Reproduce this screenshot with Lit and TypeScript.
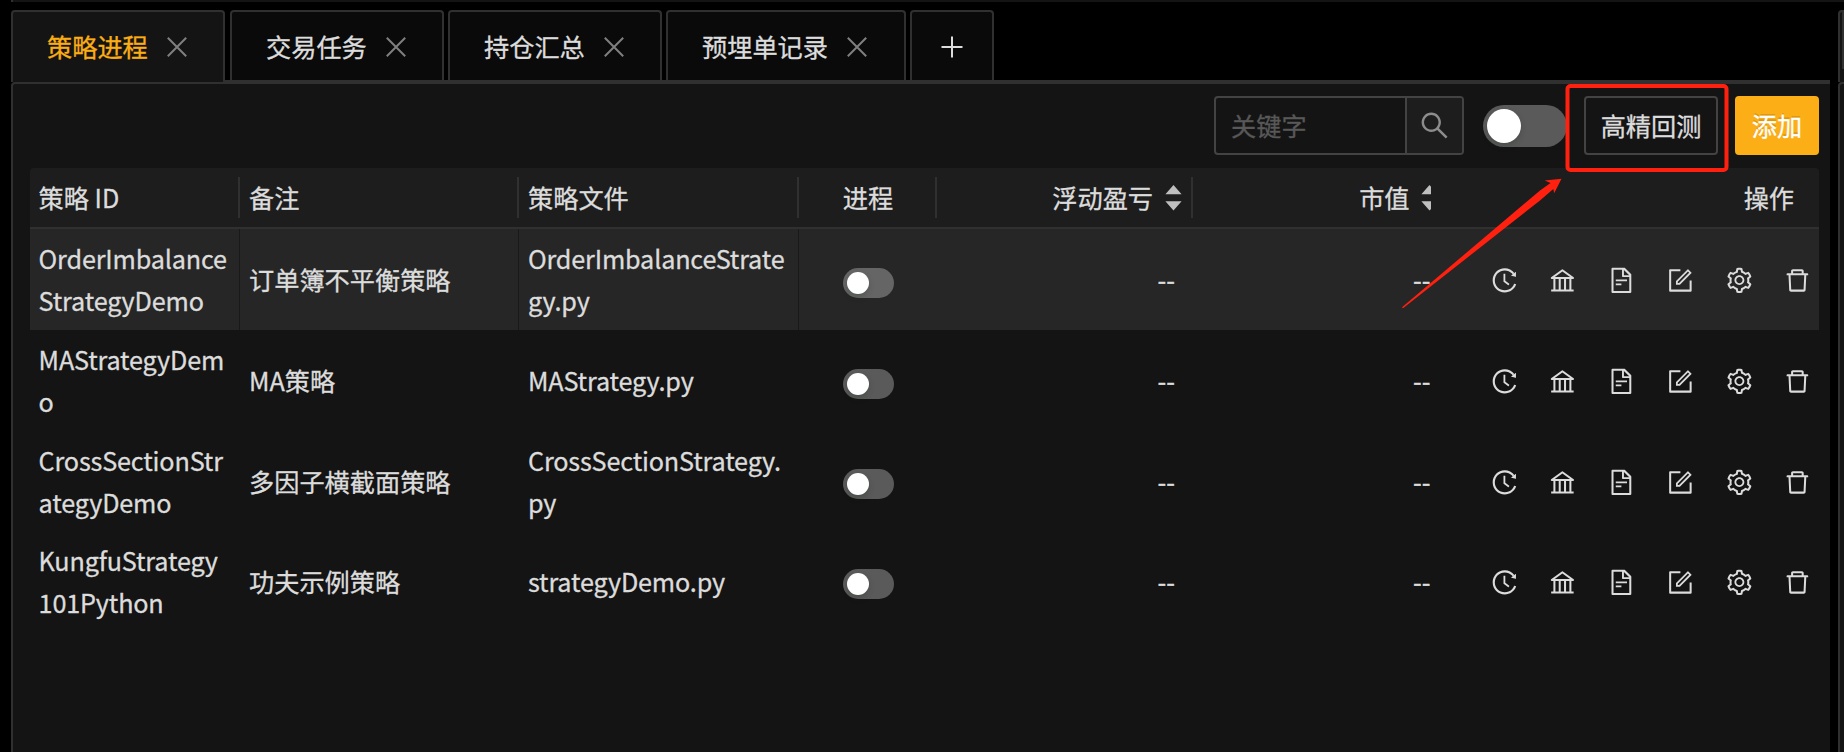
import { LitElement, html, css, svg } from "lit";
import { customElement, state } from "lit/decorators.js";

const ICONS: Record<string, string> = {
  history:
    "M536.1 273H488c-4.4 0-8 3.6-8 8v275.3c0 2.6 1.2 5 3.3 6.5l165.3 120.7c3.6 2.6 8.6 1.9 11.2-1.7l28.6-39c2.7-3.7 1.9-8.7-1.7-11.2L544.1 528.5V281c0-4.4-3.6-8-8-8zm219.8 75.2l156.8 38.3c5 1.2 9.9-2.6 9.9-7.7l.8-161.5c0-6.7-7.7-10.5-12.9-6.3L752.9 334.1a8 8 0 003 14.1zm167.7 301.1l-56.7-19.5a8 8 0 00-10.1 4.8c-1.9 5.1-3.9 10.1-6 15.1-17.8 42.1-43.3 80-75.9 112.5a353 353 0 01-112.5 75.9 352.18 352.18 0 01-137.7 27.8c-47.8 0-94.1-9.3-137.7-27.8a353 353 0 01-112.5-75.9c-32.5-32.5-58-70.4-75.9-112.5A353.44 353.44 0 01171 512c0-47.8 9.3-94.2 27.8-137.8 17.8-42.1 43.3-80 75.9-112.5a353 353 0 01112.5-75.9C430.6 167.3 477 158 524.8 158s94.1 9.3 137.7 27.8A353 353 0 01775 261.7c10.2 10.3 19.8 21 28.6 32.3l59.8-46.8C784.7 146.6 662.2 81.9 524.6 82 285 82.1 92.6 276.7 95 516.4 97.4 751.9 288.9 942 524.8 942c185.5 0 343.5-117.6 403.7-282.3 1.5-4.2-.7-8.9-4.9-10.4z",
  bank:
    "M894 462c30.9 0 43.8-39.7 18.7-58L530.8 126.2a31.81 31.81 0 00-37.6 0L111.3 404c-25.1 18.2-12.2 58 18.8 58H192v374h-72c-4.4 0-8 3.6-8 8v52c0 4.4 3.6 8 8 8h784c4.4 0 8-3.6 8-8v-52c0-4.4-3.6-8-8-8h-72V462h62zM512 196.7l271.1 197.2H240.9L512 196.7zM264 462h117v374H264V462zm189 0h117v374H453V462zm307 374H642V462h118v374z",
  file:
    "M854.6 288.6L639.4 73.4c-6-6-14.1-9.4-22.6-9.4H192c-17.7 0-32 14.3-32 32v832c0 17.7 14.3 32 32 32h640c17.7 0 32-14.3 32-32V311.3c0-8.5-3.4-16.7-9.4-22.7zM790.2 326H602V137.8L790.2 326zm1.8 562H232V136h302v216a42 42 0 0042 42h216v494zM504 618H320c-4.4 0-8 3.6-8 8v48c0 4.4 3.6 8 8 8h184c4.4 0 8-3.6 8-8v-48c0-4.4-3.6-8-8-8zM312 490v48c0 4.4 3.6 8 8 8h384c4.4 0 8-3.6 8-8v-48c0-4.4-3.6-8-8-8H320c-4.4 0-8 3.6-8 8z",
  form:
    "M904 512h-56c-4.4 0-8 3.6-8 8v320H184V184h320c4.4 0 8-3.6 8-8v-56c0-4.4-3.6-8-8-8H144c-17.7 0-32 14.3-32 32v736c0 17.7 14.3 32 32 32h736c17.7 0 32-14.3 32-32V520c0-4.4-3.6-8-8-8z M355.9 534.9L354 653.8c-.1 8.9 7.1 16.2 16 16.2h.4l118-2.9c2-.1 4-.9 5.4-2.3l415.9-415c3.1-3.1 3.1-8.2 0-11.3L785.4 114.3c-1.6-1.6-3.6-2.3-5.7-2.3s-4.1.8-5.7 2.3l-415.8 415a8.3 8.3 0 00-2.3 5.6zm63.5 23.6L779.7 199l45.2 45.1-360.5 359.7-45.7 1.1.7-46.4z",
  setting:
    "M924.8 625.7l-65.5-56c3.1-19 4.7-38.4 4.7-57.8s-1.6-38.8-4.7-57.8l65.5-56a32.03 32.03 0 009.3-35.2l-.9-2.6a443.74 443.74 0 00-79.7-137.9l-1.8-2.1a32.12 32.12 0 00-35.1-9.5l-81.3 28.9c-30-24.6-63.5-44-99.7-57.6l-15.7-85a32.05 32.05 0 00-25.8-25.7l-2.7-.5c-52.1-9.4-106.9-9.4-159 0l-2.7.5a32.05 32.05 0 00-25.8 25.7l-15.8 85.4a351.86 351.86 0 00-99 57.4l-81.9-29.1a32 32 0 00-35.1 9.5l-1.8 2.1a446.02 446.02 0 00-79.7 137.9l-.9 2.6c-4.5 12.5-.8 26.5 9.3 35.2l66.3 56.6c-3.1 18.8-4.6 38-4.6 57.1 0 19.2 1.5 38.4 4.6 57.1L99 625.5a32.03 32.03 0 00-9.3 35.2l.9 2.6c18.1 50.4 44.9 96.9 79.7 137.9l1.8 2.1a32.12 32.12 0 0035.1 9.5l81.9-29.1c29.8 24.5 63.1 43.9 99 57.4l15.8 85.4a32.05 32.05 0 0025.8 25.7l2.7.5a449.4 449.4 0 00159 0l2.7-.5a32.05 32.05 0 0025.8-25.7l15.7-85a350 350 0 0099.7-57.6l81.3 28.9a32 32 0 0035.1-9.5l1.8-2.1c34.8-41.1 61.6-87.5 79.7-137.9l.9-2.6c4.5-12.3.8-26.3-9.3-35zM788.3 465.9c2.5 15.1 3.8 30.6 3.8 46.1s-1.3 31-3.8 46.1l-6.6 40.1 74.7 63.9a370.03 370.03 0 01-42.6 73.6L721 702.8l-31.4 25.8c-23.9 19.6-50.5 35-79.3 45.8l-38.1 14.3-17.9 97a377.5 377.5 0 01-85 0l-17.9-97.2-37.8-14.5c-28.5-10.8-55-26.2-78.7-45.7l-31.4-25.9-93.4 33.2c-17-22.9-31.2-47.6-42.6-73.6l75.5-64.5-6.5-40c-2.4-14.9-3.7-30.3-3.7-45.5 0-15.3 1.2-30.6 3.7-45.5l6.5-40-75.5-64.5c11.3-26.1 25.6-50.7 42.6-73.6l93.4 33.2 31.4-25.9c23.7-19.5 50.2-34.9 78.7-45.7l37.9-14.3 17.9-97.2c28.1-3.2 56.8-3.2 85 0l17.9 97 38.1 14.3c28.7 10.8 55.4 26.2 79.3 45.8l31.4 25.8 92.8-32.9c17 22.9 31.2 47.6 42.6 73.6L781.8 426l6.5 39.9zM512 326c-97.2 0-176 78.8-176 176s78.8 176 176 176 176-78.8 176-176-78.8-176-176-176zm79.2 255.2A111.6 111.6 0 01512 614c-29.9 0-58-11.7-79.2-32.8A111.6 111.6 0 01400 502c0-29.9 11.7-58 32.8-79.2C454 401.6 482.1 390 512 390c29.9 0 58 11.6 79.2 32.8A111.6 111.6 0 01624 502c0 29.9-11.7 58-32.8 79.2z",
  trash:
    "M360 184h-8c4.4 0 8-3.6 8-8v8h304v-8c0 4.4 3.6 8 8 8h-8v72h72v-80c0-35.3-28.7-64-64-64H352c-35.3 0-64 28.7-64 64v80h72v-72zm504 72H160c-17.7 0-32 14.3-32 32v32c0 4.4 3.6 8 8 8h60.4l24.7 523c1.6 34.1 29.8 61 63.9 61h454c34.2 0 62.3-26.8 63.9-61l24.7-523H888c4.4 0 8-3.6 8-8v-32c0-17.7-14.3-32-32-32zM731.3 840H292.7l-24.2-512h487l-24.2 512z",
  search:
    "M909.6 854.5L649.9 594.8C690.2 542.7 712 479 712 412c0-80.2-31.3-155.4-87.9-212.1-56.6-56.7-132-87.9-212.1-87.9s-155.5 31.3-212.1 87.9C143.2 256.5 112 331.8 112 412c0 80.1 31.3 155.5 87.9 212.1C256.5 680.8 331.8 712 412 712c67 0 130.6-21.8 182.7-62l259.7 259.6a8.2 8.2 0 0011.6 0l43.6-43.5a8.2 8.2 0 000-11.6zM570.4 570.4C528 612.7 471.8 636 412 636s-116-23.3-158.4-65.6C211.3 528 188 471.8 188 412s23.3-116.1 65.6-158.4C296 211.3 352.2 188 412 188s116.1 23.2 158.4 65.6S636 352.2 636 412s-23.3 116.1-65.6 158.4z",
};

const icon = (name: string) =>
  html`<svg class="icon" viewBox="0 0 1024 1024">${svg`<path d=${ICONS[name]}></path>`}</svg>`;

const sorter = html`<svg class="sorter" viewBox="0 0 17 26">
  <path d="M8.5 0L16.6 9.3H.4zM8.5 25.6L.4 16.3h16.2z"></path>
</svg>`;

const ACTIONS = ["history", "bank", "file", "form", "setting", "trash"];

interface Strategy {
  id: string;
  note: string;
  file: string;
}

@customElement("app-root")
export class AppRoot extends LitElement {
  @state() private active = 0;
  private tabs = ["策略进程", "交易任务", "持仓汇总", "预埋单记录"];
  private rows: Strategy[] = [
    { id: "OrderImbalanceStrategyDemo", note: "订单簿不平衡策略", file: "OrderImbalanceStrategy.py" },
    { id: "MAStrategyDemo", note: "MA策略", file: "MAStrategy.py" },
    { id: "CrossSectionStrategyDemo", note: "多因子横截面策略", file: "CrossSectionStrategy.py" },
    { id: "KungfuStrategy101Python", note: "功夫示例策略", file: "strategyDemo.py" },
  ];

  static styles = css`
    :host {
      display: block;
      position: relative;
      width: 1844px;
      height: 752px;
      overflow: hidden;
      background: #000;
      color: #dcdcdc;
      font: 25.2px/42px "Noto Sans CJK SC", sans-serif;
      -webkit-text-stroke: 0.3px currentColor;
    }
    * {
      box-sizing: border-box;
    }
    .layout {
      display: flex;
      flex-direction: column;
      height: 100%;
      padding-left: 11px;
    }
    .upper {
      height: 2px;
      flex: none;
      background: #141414;
      border-left: 2px solid #303030;
      margin-bottom: 8px;
    }
    .main {
      flex: 1;
      min-height: 0;
      display: flex;
      gap: 8px;
    }
    .board {
      width: 1819px;
      flex: none;
      display: flex;
      flex-direction: column;
    }
    .tabs {
      display: flex;
      gap: 4px;
      height: 72px;
      flex: none;
      box-shadow: inset 0 -2px #303030;
    }
    .tab {
      height: 70px;
      display: flex;
      align-items: center;
      width: 214px;
      padding: 2px 0 0 34px;
      gap: 19px;
      border: 2px solid #303030;
      border-bottom: 0;
      border-radius: 4px 4px 0 0;
      background: #0a0a0a;
    }
    .tab span {
      padding-bottom: 2px;
    }
    .tab.active {
      height: 72px;
      padding: 2px 0 2px 34px;
      margin-right: 1px;
      background: #141414;
      color: #faad14;
    }
    .tab.wide {
      width: 240px;
      padding-left: 34px;
    }
    .tab.plus {
      width: 84px;
      padding-left: 29px;
    }
    .close {
      width: 20px;
      height: 20px;
      stroke: #7f7f7f;
      stroke-width: 2;
    }
    .add-icon {
      width: 22px;
      height: 22px;
      stroke: #dcdcdc;
      stroke-width: 2;
    }
    .panel {
      flex: 1;
      border: 2px solid #303030;
      border-width: 2px 0 0 2px;
      border-radius: 4px 0 0 0;
      background: #141414;
      padding: 12px 11px 0 17px;
    }
    .toolbar {
      display: flex;
      justify-content: flex-end;
      align-items: center;
      height: 59px;
      margin-bottom: 13px;
    }
    .search {
      display: flex;
      width: 250px;
      height: 59px;
      border: 2px solid #434343;
      border-radius: 4px;
      overflow: hidden;
      margin-right: 19px;
    }
    .placeholder {
      flex: 1;
      padding: 6px 0 0 15px;
      color: #585858;
    }
    .search-button {
      width: 57px;
      border-left: 2px solid #434343;
      background: #1d1d1d;
      display: grid;
      place-items: center;
      fill: #8c8c8c;
    }
    .search-button .icon {
      width: 33px;
      height: 33px;
    }
    .switch {
      display: block;
      width: 51px;
      height: 30px;
      border-radius: 15px;
      background: #5a5a5a;
      padding: 4px;
    }
    .knob {
      display: block;
      width: 22px;
      height: 22px;
      border-radius: 50%;
      background: #fff;
      box-shadow: 0 3px 6px rgba(0, 35, 11, 0.2);
    }
    .switch.large {
      width: 84px;
      height: 42px;
      border-radius: 21px;
      margin-right: 17px;
    }
    .switch.large .knob {
      width: 34px;
      height: 34px;
    }
    .button {
      width: 134px;
      height: 59px;
      border: 2px solid #434343;
      border-radius: 4px;
      padding-top: 6px;
      text-align: center;
      margin-right: 17px;
    }
    .button.primary {
      width: 84px;
      margin: 0;
      border-color: #fcae17;
      background: #fcae17;
      color: #fff;
      text-shadow: 0 -2px 0 rgba(0, 0, 0, 0.12);
    }
    .grid {
      display: grid;
      grid-template-columns: 210px 279px 280px 138px 256px 247px 1fr;
    }
    .head {
      height: 61px;
      background: #1d1d1d;
      border-bottom: 2px solid #303030;
      border-radius: 4px 4px 0 0;
      align-items: center;
    }
    .head > div {
      height: 41px;
      display: flex;
      align-items: center;
      padding: 0 9px 2px;
      border-right: 2px solid #303030;
    }
    .grid > div:first-child {
      padding-left: 8.6px;
    }
    .head > .last,
    .head > .open {
      border-right: 0;
    }
    .head > .end {
      justify-content: flex-end;
    }
    .head > .pnl {
      padding-right: 9px;
    }
    .head > .last {
      padding-right: 25px;
    }
    .head > .center {
      justify-content: center;
      padding: 0 7px 2px 9px;
    }
    .sorter {
      width: 17px;
      height: 26px;
      margin: 2px 0 0 12px;
      fill: #bfbfbf;
      flex: none;
    }
    .clip {
      width: 10px;
      height: 26px;
      overflow: hidden;
      margin: 2px 0 0 11.5px;
      flex: none;
    }
    .clip .sorter {
      margin: 0;
      display: block;
    }
    .row {
      height: 100.4px;
    }
    .row > div {
      display: flex;
      align-items: center;
      padding: 0 9px;
      word-break: break-all;
    }
    .latin {
      letter-spacing: -0.16px;
    }
    .row.hover {
      height: 101px;
      background: #262626;
    }
    .row.hover > div {
      padding-bottom: 2px;
    }
    .row.hover > .line {
      border-right: 1px solid #191919;
    }
    .row > .line {
      padding-right: 8px;
    }
    .row > .line:first-child {
      padding-right: 11px;
    }
    .row.hover .switch {
      background: #656565;
    }
    .row > .toggle {
      padding: 7px 0 0 44px;
    }
    .row.hover > .toggle {
      padding: 7px 0 0 44px;
    }
    .row > .num {
      justify-content: flex-end;
    }
    .row > .num.pnl {
      padding-right: 18px;
    }
    .row > .num.value {
      padding-right: 9.5px;
    }
    .row > .actions {
      justify-content: flex-end;
      padding: 3px 7px 0 0;
      gap: 29.9px;
      fill: #dcdcdc;
    }
    .row.hover > .actions {
      padding: 1px 7px 0 0;
    }
    .icon {
      width: 28.8px;
      height: 28.8px;
      flex: none;
    }
    .side {
      flex: 1;
      display: flex;
      flex-direction: column;
    }
    .side-tab {
      height: 72px;
      border: 2px solid #303030;
      border-width: 2px 0 0 2px;
      border-radius: 4px 0 0 0;
      background: #141414;
      padding-left: 2px;
    }
    .side-mark {
      height: 57px;
      background: #303030;
    }
    .side-panel {
      flex: 1;
      border: 2px solid #303030;
      border-width: 2px 0 0 2px;
      border-radius: 4px 0 0 0;
      background: #141414;
    }
    .annotation {
      position: absolute;
      left: 1395px;
      top: 80px;
      width: 340px;
      height: 235px;
      pointer-events: none;
    }
  `;

  private renderRow(r: Strategy, i: number) {
    return html`<div class="grid row ${i === 0 ? "hover" : ""}">
      <div class="line latin"><span>${r.id}</span></div>
      <div class="line"><span>${r.note}</span></div>
      <div class="line latin"><span>${r.file}</span></div>
      <div class="toggle"><span class="switch"><span class="knob"></span></span></div>
      <div class="num pnl">--</div>
      <div class="num value">--</div>
      <div class="actions">${ACTIONS.map(icon)}</div>
    </div>`;
  }

  render() {
    return html`
      <div class="layout">
        <div class="upper"></div>
        <div class="main">
          <div class="board">
            <div class="tabs">
              ${this.tabs.map(
                (t, i) => html`<div
                  class="tab ${i === this.active ? "active" : ""} ${t.length > 4 ? "wide" : ""}"
                  @click=${() => (this.active = i)}
                >
                  <span>${t}</span>
                  <svg class="close" viewBox="0 0 20 20"><path d="M.8.8l18.4 18.4M19.2.8L.8 19.2"></path></svg>
                </div>`
              )}
              <div class="tab plus">
                <svg class="add-icon" viewBox="0 0 22 22"><path d="M11 .5v21M.5 11h21"></path></svg>
              </div>
            </div>
            <div class="panel">
              <div class="toolbar">
                <div class="search">
                  <div class="placeholder">关键字</div>
                  <div class="search-button">${icon("search")}</div>
                </div>
                <span class="switch large"><span class="knob"></span></span>
                <div class="button">高精回测</div>
                <div class="button primary">添加</div>
              </div>
              <div class="grid head">
                <div>策略 ID</div>
                <div>备注</div>
                <div>策略文件</div>
                <div class="center">进程</div>
                <div class="end pnl">浮动盈亏${sorter}</div>
                <div class="end open">市值<span class="clip">${sorter}</span></div>
                <div class="end last">操作</div>
              </div>
              ${this.rows.map((r, i) => this.renderRow(r, i))}
            </div>
          </div>
          <div class="side">
            <div class="side-tab"><div class="side-mark"></div></div>
            <div class="side-panel"></div>
          </div>
        </div>
      </div>
      <svg class="annotation" viewBox="1395 80 340 235">
        <rect x="1567.5" y="86" width="159" height="84" rx="3" fill="none" stroke="#ff2010" stroke-width="4"></rect>
        <path
          d="M1402 307.2L1540 190.5L1550.5 183L1544.7 180.5L1561.5 178.7L1554.2 193.3L1553.3 189L1540 200.5L1403 308.2Z"
          fill="#ff2010"
        ></path>
      </svg>
    `;
  }
}
